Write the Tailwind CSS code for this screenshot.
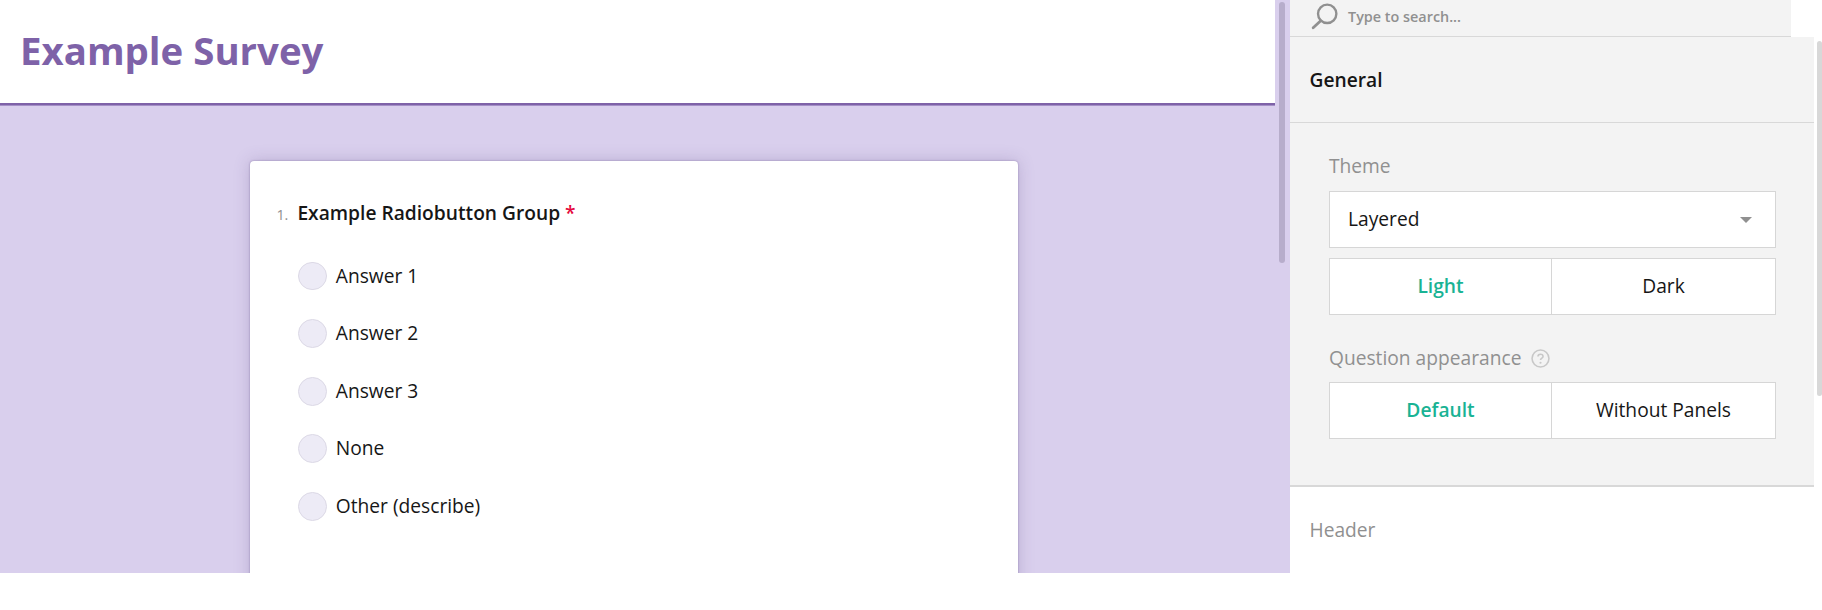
<!DOCTYPE html>
<html lang="en">
<head>
    <meta charset="UTF-8">
    <title>Example Survey</title>
    <script src="https://cdn.jsdelivr.net/npm/@tailwindcss/browser@4"></script>
</head>
<body class="bg-white font-['Open_Sans',sans-serif] text-[19.2px] text-[#161616] overflow-hidden">
    <div class="flex h-[573px] w-[1822px]">
        <!-- survey preview -->
        <div class="relative w-[1290px] h-full overflow-hidden bg-[#d9cfed]">
            <div class="w-[1275px] h-[105px] bg-white border-b-[2px] border-[#7e62a8] shadow-[0_1px_0_#a48fc6] pl-[20px] pt-[23px]">
                <h1 class="text-[38.4px] leading-[54px] font-bold text-[#7e62a8]">Example Survey</h1>
            </div>
            <div class="ml-[250px] mt-[56px] w-[768px] h-[500px] bg-white rounded-[4px] shadow-[0_0_2px_rgba(90,70,130,0.55),0_0_16px_rgba(90,70,130,0.25)] pl-[26.4px] pt-[38px]">
                <div class="flex items-baseline h-[28px] leading-[28px]">
                    <span class="w-[21px] text-[14.4px] text-[#909090]">1.</span>
                    <span class="font-semibold">Example Radiobutton Group</span>
                    <span class="ml-[5px] font-semibold text-[#e50a3e]">*</span>
                </div>
                <div class="mt-[34.6px] ml-[21.6px] flex flex-col gap-[28.8px]">
                    <label class="flex items-center h-[28.8px] gap-[9px]"><span class="w-[28.8px] h-[28.8px] rounded-full bg-[#edebf6] border border-[#dcd9e6]"></span>Answer 1</label>
                    <label class="flex items-center h-[28.8px] gap-[9px]"><span class="w-[28.8px] h-[28.8px] rounded-full bg-[#edebf6] border border-[#dcd9e6]"></span>Answer 2</label>
                    <label class="flex items-center h-[28.8px] gap-[9px]"><span class="w-[28.8px] h-[28.8px] rounded-full bg-[#edebf6] border border-[#dcd9e6]"></span>Answer 3</label>
                    <label class="flex items-center h-[28.8px] gap-[9px]"><span class="w-[28.8px] h-[28.8px] rounded-full bg-[#edebf6] border border-[#dcd9e6]"></span>None</label>
                    <label class="flex items-center h-[28.8px] gap-[9px]"><span class="w-[28.8px] h-[28.8px] rounded-full bg-[#edebf6] border border-[#dcd9e6]"></span>Other (describe)</label>
                </div>
            </div>
            <!-- scrollbar -->
            <div class="absolute left-[1279px] top-[2px] w-[6px] h-[261px] rounded-[3px] bg-[#b7adcb]"></div>
        </div>

        <!-- property grid -->
        <div class="relative w-[532px] h-full">
            <div class="w-[501px] h-[37px] bg-[#f3f3f3] border-b border-[#d8d8d8] flex items-start pl-[21px] pt-[3px]">
                <svg class="w-[27px] h-[27px] text-[#909090]" viewBox="0 0 25 25" fill="none" stroke="currentColor">
                    <circle cx="15" cy="10" r="8.5" stroke-width="2.2"></circle>
                    <path d="M9 16.5L2 23" stroke-width="2.6" stroke-linecap="round"></path>
                </svg>
                <span class="ml-[10px] text-[14.4px] leading-[27px] font-semibold text-[#909090]">Type to search...</span>
            </div>
            <div class="w-[524px] bg-[#f3f3f3]">
                <div class="h-[86px] border-b border-[#d8d8d8] pl-[19.5px] pt-[31px] text-[19.2px] leading-[24px] font-semibold">General</div>
                <div class="h-[364px] border-b-2 border-[#d8d8d8] pl-[39px] pt-[31px]">
                    <div class="h-[37px] leading-[24px] text-[#909090]">Theme</div>
                    <div class="w-[447px] h-[57px] bg-white border border-[#d6d6d6] flex items-center justify-between pl-[18px] pr-[23px]">
                        <span>Layered</span>
                        <svg class="w-[12px] h-[6px]" viewBox="0 0 12 6"><path d="M0 0H12L6 6Z" fill="#909090"></path></svg>
                    </div>
                    <div class="mt-[10px] w-[447px] h-[57px] bg-white border border-[#d6d6d6] flex items-center text-center">
                        <span class="w-[221px] font-semibold text-[#19b394]">Light</span>
                        <span class="flex-1 h-full leading-[54px] border-l border-[#d6d6d6]">Dark</span>
                    </div>
                    <div class="mt-[31px] h-[36px] flex items-start leading-[24px] text-[#909090]">
                        Question appearance
                        <svg class="ml-[10px] mt-[2.5px] w-[19px] h-[19px]" viewBox="0 0 18 18" fill="none" stroke="#c8c8c8">
                            <circle cx="9" cy="9" r="8" stroke-width="1.5"></circle>
                            <path d="M6.6 7.2C6.6 5.8 7.7 5 9 5C10.4 5 11.4 5.9 11.4 7C11.4 8.6 9 8.6 9 10.5" stroke-width="1.5"></path>
                            <circle cx="9" cy="13" r="1" fill="#c8c8c8" stroke="none"></circle>
                        </svg>
                    </div>
                    <div class="w-[447px] h-[57px] bg-white border border-[#d6d6d6] flex items-center text-center">
                        <span class="w-[221px] font-semibold text-[#19b394]">Default</span>
                        <span class="flex-1 h-full leading-[54px] border-l border-[#d6d6d6]">Without Panels</span>
                    </div>
                </div>
                <div class="bg-white h-[85px] pl-[19.5px] pt-[31px] leading-[24px] text-[#909090]">Header</div>
            </div>
            <!-- scrollbar -->
            <div class="absolute left-[527px] top-[41px] w-[5px] h-[355px] rounded-[3px] bg-[#d8d8d8]"></div>
        </div>
    </div>
</body>
</html>
